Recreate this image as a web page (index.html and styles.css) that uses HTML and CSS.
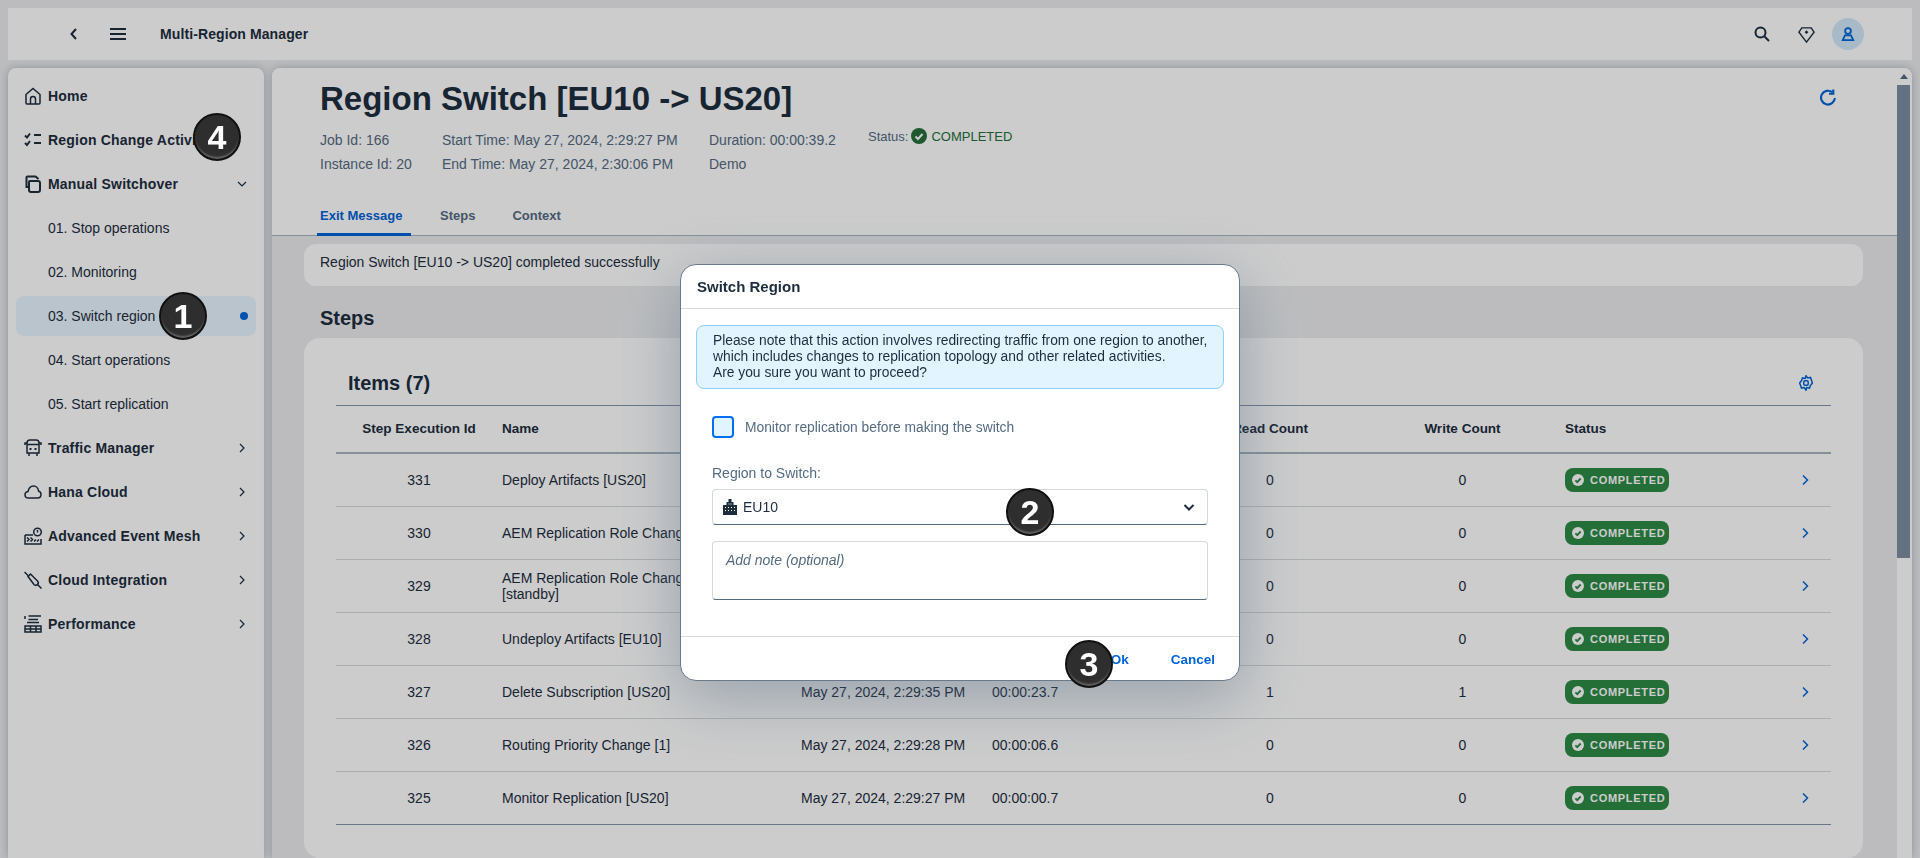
FILE: index.html
```html
<!DOCTYPE html>
<html lang="en">
<head>
  <meta charset="UTF-8" />
  <title>Multi-Region Manager</title>
  <link rel="stylesheet" href="styles.css">
</head>
<body>

  <header class="topbar">
    <svg class="top-back" viewBox="0 0 16 16"><path d="M10 3 5.500 8l4.500 5"/></svg>
    <svg class="top-menu" viewBox="0 0 16 12"><path d="M0 1h16M0 6h16M0 11h16"/></svg>
    <span class="top-title">Multi-Region Manager</span>
    <div class="top-actions">
      <svg class="ico-search" viewBox="0 0 16 16"><circle cx="6.500" cy="6.500" r="5"/><path d="m10.500 10.500 4.500 4.500"/></svg>
      <svg class="ico-diamond" viewBox="0 0 18 18"><path d="M4 2h10l3 4.500L9 17 1 6.500z"/><path class="fill" d="M9 4.500l2 2-2 2-2-2z"/></svg>
      <span class="avatar">
        <svg viewBox="0 0 16 16"><circle cx="8" cy="4.500" r="3.300"/><path d="M4.500 9.500h7l2.500 5.500H2z"/></svg>
      </span>
    </div>
  </header>

  <div class="layout">
    <nav class="sidenav">
      <a class="nav-item">
        <svg viewBox="0 0 18 18"><path d="M2 7.500 9 1.500l7 6V16a1 1 0 0 1-1 1H3a1 1 0 0 1-1-1zM6.500 17v-5a2.500 2.500 0 0 1 5 0v5"/></svg>
        <span>Home</span>
      </a>
      <a class="nav-item">
        <svg class="ico-thick" viewBox="0 0 18 16"><path d="m1 3.500 2 2 3-4M1 11l2 2 3-4M10 3h7M10 11h7"/></svg>
        <span>Region Change Activities</span>
      </a>
      <a class="nav-item">
        <svg class="ico-thick" viewBox="0 0 18 18"><path d="M4 12H2.500V2.500a1 1 0 0 1 1-1h8l3 2.500M6 6h8a2 2 0 0 1 2 2v7a2 2 0 0 1-2 2H7a2 2 0 0 1-2-2V7a1 1 0 0 1 1-1z"/></svg>
        <span>Manual Switchover</span>
        <svg class="nav-arrow" viewBox="0 0 12 12"><path d="m2 4 4 4 4-4"/></svg>
      </a>
      <a class="nav-sub">01. Stop operations</a>
      <a class="nav-sub">02. Monitoring</a>
      <a class="nav-sub active">03. Switch region<i class="nav-dot"></i></a>
      <a class="nav-sub">04. Start operations</a>
      <a class="nav-sub">05. Start replication</a>
      <a class="nav-item">
        <svg viewBox="0 0 18 18"><path d="M3 4c0-2 1-3 3-3h6c2 0 3 1 3 3v10H3zM3 4H1v2M15 4h2v2M3 5.500h12M5 14v3M13 14v3"/><path class="fill" d="M5.500 9h2v2h-2zM10.500 9h2v2h-2z"/></svg>
        <span>Traffic Manager</span>
        <svg class="nav-arrow" viewBox="0 0 12 12"><path d="m4 2 4 4-4 4"/></svg>
      </a>
      <a class="nav-item">
        <svg viewBox="0 0 18 14"><path d="M4.500 13C2.500 13 1 11.500 1 9.700 1 8 2.300 6.700 4 6.500 4.700 3.300 6.800 1 9.500 1c2.800 0 4.800 2.300 5 5 1.500.5 2.500 1.900 2.500 3.500 0 2-1.500 3.500-3.500 3.500z"/></svg>
        <span>Hana Cloud</span>
        <svg class="nav-arrow" viewBox="0 0 12 12"><path d="m4 2 4 4-4 4"/></svg>
      </a>
      <a class="nav-item">
        <svg viewBox="0 0 18 18"><path d="M1 8h8M1 8v9h16v-5M3 10.500l2 2-2 2M6.500 10.500l2 2-2 2M10 14.500l2-2M13 14.500l2-2"/><circle cx="13.500" cy="5" r="3.800"/><path d="M13.500 3v2.500"/></svg>
        <span>Advanced Event Mesh</span>
        <svg class="nav-arrow" viewBox="0 0 12 12"><path d="m4 2 4 4-4 4"/></svg>
      </a>
      <a class="nav-item">
        <svg viewBox="0 0 18 18"><path d="M0.500 1 5 5.500M13 13l4.500 4.500"/><path d="M4 5.500 6.500 3l7 7c1 1 1 2.500 0 3.500s-2.500 1-3.500 0z"/></svg>
        <span>Cloud Integration</span>
        <svg class="nav-arrow" viewBox="0 0 12 12"><path d="m4 2 4 4-4 4"/></svg>
      </a>
      <a class="nav-item">
        <svg viewBox="0 0 18 18"><path d="M1 1v3M4.500 1H17M4.500 4.500H14M3 7.500h12M1 11h16v6H1zM1 14h16M6.500 11v6M12 11v6"/></svg>
        <span>Performance</span>
        <svg class="nav-arrow" viewBox="0 0 12 12"><path d="m4 2 4 4-4 4"/></svg>
      </a>
    </nav>

    <div class="main">
      <div class="main-scroll">
        <section class="job-header">
          <h1>Region Switch [EU10 -&gt; US20]</h1>
          <div class="job-meta">
            <div class="meta-col meta-ids">
              <span>Job Id: 166</span>
              <span>Instance Id: 20</span>
            </div>
            <div class="meta-col meta-times">
              <span>Start Time: May 27, 2024, 2:29:27 PM</span>
              <span>End Time: May 27, 2024, 2:30:06 PM</span>
            </div>
            <div class="meta-col meta-duration">
              <span>Duration: 00:00:39.2</span>
              <span>Demo</span>
            </div>
            <div class="meta-status">
              Status:
              <svg viewBox="0 0 16 16"><circle class="fill" cx="8" cy="8" r="8"/><path class="tick" d="m4.500 8.500 2.500 2.500 4.500-5"/></svg>
              <em>COMPLETED</em>
            </div>
          </div>
          <svg class="ico-refresh" viewBox="0 0 16 16"><path d="M14 8.500A6.500 6.500 0 1 1 11.500 3"/><path d="M12.500 0.500V4.500H8.500"/></svg>
          <div class="tabs">
            <a class="tab active">Exit Message</a>
            <a class="tab">Steps</a>
            <a class="tab">Context</a>
          </div>
        </section>

        <div class="content">
          <div class="exit-message">Region Switch [EU10 -&gt; US20] completed successfully</div>
          <h2 class="steps-title">Steps</h2>

          <div class="items-card">
            <div class="items-head">
              <h3>Items (7)</h3>
              <svg class="ico-gear" viewBox="0 0 14 16"><path d="M7 .8l1.700 2.100 2.800-.5.900 2.500L13.400 8l-2 2.600-.900 2.500-2.800-.5L7 15.200l-1.700-2.600-2.800.5-.9-2.500L.6 8l2-2.600.9-2.500 2.800.5z"/><rect x="4.800" y="5.800" width="4.400" height="4.400" rx="1.200"/></svg>
            </div>
            <table class="steps-table">
              <colgroup>
                <col class="c-id"><col class="c-name"><col class="c-start"><col class="c-dur"><col class="c-read"><col class="c-write"><col class="c-status"><col class="c-go">
              </colgroup>
              <thead>
                <tr>
                  <th class="num">Step Execution Id</th><th>Name</th><th>Start Time</th><th>Duration</th><th class="num">Read Count</th><th class="num">Write Count</th><th>Status</th><th></th>
                </tr>
              </thead>
              <tbody>
                <tr>
                  <td class="num">331</td><td>Deploy Artifacts [US20]</td><td>May 27, 2024, 2:30:02 PM</td><td>00:00:03.6</td><td class="num">0</td><td class="num">0</td>
                  <td><span class="badge"><svg viewBox="0 0 16 16"><circle class="fill" cx="8" cy="8" r="8"/><path d="m4.500 8.500 2.500 2.500 4.500-5"/></svg>COMPLETED</span></td>
                  <td class="go"><svg viewBox="0 0 12 12"><path d="m4 1.500 4.500 4.500L4 10.500"/></svg></td>
                </tr>
                <tr>
                  <td class="num">330</td><td>AEM Replication Role Change [primary]</td><td>May 27, 2024, 2:30:01 PM</td><td>00:00:01.2</td><td class="num">0</td><td class="num">0</td>
                  <td><span class="badge"><svg viewBox="0 0 16 16"><circle class="fill" cx="8" cy="8" r="8"/><path d="m4.500 8.500 2.500 2.500 4.500-5"/></svg>COMPLETED</span></td>
                  <td class="go"><svg viewBox="0 0 12 12"><path d="m4 1.500 4.500 4.500L4 10.500"/></svg></td>
                </tr>
                <tr>
                  <td class="num">329</td><td class="wrap">AEM Replication Role Change<br>[standby]</td><td>May 27, 2024, 2:30:00 PM</td><td>00:00:01.1</td><td class="num">0</td><td class="num">0</td>
                  <td><span class="badge"><svg viewBox="0 0 16 16"><circle class="fill" cx="8" cy="8" r="8"/><path d="m4.500 8.500 2.500 2.500 4.500-5"/></svg>COMPLETED</span></td>
                  <td class="go"><svg viewBox="0 0 12 12"><path d="m4 1.500 4.500 4.500L4 10.500"/></svg></td>
                </tr>
                <tr>
                  <td class="num">328</td><td>Undeploy Artifacts [EU10]</td><td>May 27, 2024, 2:29:59 PM</td><td>00:00:00.8</td><td class="num">0</td><td class="num">0</td>
                  <td><span class="badge"><svg viewBox="0 0 16 16"><circle class="fill" cx="8" cy="8" r="8"/><path d="m4.500 8.500 2.500 2.500 4.500-5"/></svg>COMPLETED</span></td>
                  <td class="go"><svg viewBox="0 0 12 12"><path d="m4 1.500 4.500 4.500L4 10.500"/></svg></td>
                </tr>
                <tr>
                  <td class="num">327</td><td>Delete Subscription [US20]</td><td>May 27, 2024, 2:29:35 PM</td><td>00:00:23.7</td><td class="num">1</td><td class="num">1</td>
                  <td><span class="badge"><svg viewBox="0 0 16 16"><circle class="fill" cx="8" cy="8" r="8"/><path d="m4.500 8.500 2.500 2.500 4.500-5"/></svg>COMPLETED</span></td>
                  <td class="go"><svg viewBox="0 0 12 12"><path d="m4 1.500 4.500 4.500L4 10.500"/></svg></td>
                </tr>
                <tr>
                  <td class="num">326</td><td>Routing Priority Change [1]</td><td>May 27, 2024, 2:29:28 PM</td><td>00:00:06.6</td><td class="num">0</td><td class="num">0</td>
                  <td><span class="badge"><svg viewBox="0 0 16 16"><circle class="fill" cx="8" cy="8" r="8"/><path d="m4.500 8.500 2.500 2.500 4.500-5"/></svg>COMPLETED</span></td>
                  <td class="go"><svg viewBox="0 0 12 12"><path d="m4 1.500 4.500 4.500L4 10.500"/></svg></td>
                </tr>
                <tr>
                  <td class="num">325</td><td>Monitor Replication [US20]</td><td>May 27, 2024, 2:29:27 PM</td><td>00:00:00.7</td><td class="num">0</td><td class="num">0</td>
                  <td><span class="badge"><svg viewBox="0 0 16 16"><circle class="fill" cx="8" cy="8" r="8"/><path d="m4.500 8.500 2.500 2.500 4.500-5"/></svg>COMPLETED</span></td>
                  <td class="go"><svg viewBox="0 0 12 12"><path d="m4 1.500 4.500 4.500L4 10.500"/></svg></td>
                </tr>
              </tbody>
            </table>
          </div>
        </div>
      </div>

      <div class="scrollbar">
        <i class="scroll-up"></i>
        <div class="scroll-thumb"></div>
      </div>
    </div>
  </div>

  <div class="block-layer"></div>

  <div class="dialog">
    <div class="dialog-head">Switch Region</div>
    <div class="dialog-body">
      <div class="info-strip">
        Please note that this action involves redirecting traffic from one region to another,<br>
        which includes changes to replication topology and other related activities.<br>
        Are you sure you want to proceed?
      </div>
      <div class="form">
        <label class="check-row"><span class="checkbox"></span>Monitor replication before making the switch</label>
        <div class="field-label">Region to Switch:</div>
        <div class="select">
          <svg class="ico-building" viewBox="0 0 14 16"><path class="fill" d="M5.500 0h3v3h2v3H14v10H0V6h3.500V3h2z"/><path class="win" d="M5.500 5h1M7.500 5h1M2 8.500h1M5 8.500h1M8 8.500h1M11 8.500h1M2 11.500h1M5 11.500h1M8 11.500h1M11 11.500h1"/></svg>
          <span>EU10</span>
          <svg class="select-arrow" viewBox="0 0 12 12"><path d="m1.500 4 4.500 4.500L10.500 4"/></svg>
        </div>
        <div class="note">Add note (optional)</div>
      </div>
    </div>
    <div class="dialog-foot">
      <a class="dlg-btn">Ok</a>
      <a class="dlg-btn">Cancel</a>
    </div>
  </div>

  <span class="marker m1">1</span>
  <span class="marker m2">2</span>
  <span class="marker m3">3</span>
  <span class="marker m4">4</span>

</body>
</html>
```

FILE: styles.css
```css
* {
  box-sizing: border-box;
  margin: 0;
  padding: 0;
}

html, body {
  height: 100%;
}

body {
  font-family: "Liberation Sans", Arial, sans-serif;
  font-size: 14px;
  color: #1d2d3e;
  background: #ebecee;
  overflow: hidden;
  display: flex;
  flex-direction: column;
  gap: 8px;
  padding: 8px 8px 0;
}

svg {
  fill: none;
  stroke: currentColor;
  stroke-width: 1.5;
  flex: none;
}

svg .fill {
  fill: currentColor;
  stroke: none;
}

/* top bar */
.topbar {
  height: 52px;
  flex: none;
  background: #fff;
  display: flex;
  align-items: center;
  padding-left: 58px;
}

.top-back {
  width: 16px;
  height: 16px;
  stroke-width: 2;
}

.top-menu {
  width: 16px;
  height: 12px;
  margin-left: 28px;
  stroke-width: 2;
}

.top-title {
  font-weight: bold;
  margin-left: 34px;
  letter-spacing: 0.1px;
}

.top-actions {
  margin-left: auto;
  display: flex;
  align-items: center;
  padding-right: 48px;
}

.ico-search {
  width: 16px;
  height: 16px;
  stroke-width: 2;
}

.ico-diamond {
  width: 17px;
  height: 17px;
  margin-left: 28px;
}

.avatar {
  width: 32px;
  height: 32px;
  border-radius: 50%;
  background: #d3e9f9;
  color: #0064d9;
  margin-left: 17px;
  display: flex;
  align-items: center;
  justify-content: center;
}

.avatar svg {
  width: 14px;
  height: 14px;
  stroke-width: 2;
}

.layout {
  flex: 1;
  min-height: 0;
  display: flex;
  gap: 8px;
}

/* side navigation */
.sidenav {
  width: 256px;
  flex: none;
  background: #fff;
  border-radius: 8px 8px 0 0;
  box-shadow: 0 0 8px rgba(85, 107, 130, 0.4);
  padding: 8px 8px;
  display: flex;
  flex-direction: column;
  gap: 4px;
}

.nav-item {
  height: 40px;
  display: flex;
  align-items: center;
  padding-left: 8px;
  padding-right: 8px;
  font-weight: bold;
  white-space: nowrap;
  letter-spacing: 0.2px;
  overflow: hidden;
}

.nav-item > svg:first-child {
  width: 18px;
  height: 18px;
  margin-right: 6px;
}

.nav-item > .ico-thick:first-child {
  stroke-width: 2;
}

.nav-arrow {
  width: 12px;
  height: 12px;
  margin-left: auto;
  stroke-width: 1.2;
}

.nav-sub {
  height: 40px;
  display: flex;
  align-items: center;
  padding-left: 32px;
  padding-right: 8px;
  border-radius: 8px;
}

.nav-sub.active {
  background: #e9f6ff;
}

.nav-dot {
  width: 8px;
  height: 8px;
  border-radius: 50%;
  background: #0064d9;
  margin-left: auto;
}

/* main panel */
.main {
  flex: 1;
  min-width: 0;
  display: flex;
  background: #ebecee;
  border-radius: 8px 8px 0 0;
  box-shadow: 0 0 8px rgba(85, 107, 130, 0.4);
  overflow: hidden;
}

.main-scroll {
  flex: 1;
  min-width: 0;
  overflow: hidden;
}

.scrollbar {
  width: 15px;
  flex: none;
  background: #fff;
  padding: 6px 2px 0 0;
  display: flex;
  flex-direction: column;
  align-items: center;
}

.scroll-up {
  border: 4px solid transparent;
  border-top: 0;
  border-bottom: 5px solid #556b82;
  width: 0;
  height: 5px;
  margin-bottom: 6px;
}

.scroll-thumb {
  width: 13px;
  height: 473px;
  background: #7d8ea1;
}

.job-header {
  position: relative;
  height: 168px;
  background: #fff;
  border-bottom: 1px solid #a9b4be;
  padding: 0 0 0 48px;
}

.job-header h1 {
  font-size: 33px;
  line-height: 40px;
  padding-top: 11px;
  height: 58px;
}

.job-meta {
  display: flex;
  color: #556b82;
  margin-top: 6px;
}

.meta-col {
  display: flex;
  flex-direction: column;
  gap: 8px;
  line-height: 16px;
}

.meta-ids {
  width: 122px;
}

.meta-times {
  width: 267px;
}

.meta-duration {
  width: 159px;
}

.meta-status {
  display: flex;
  align-items: center;
  gap: 2px;
  height: 16px;
  margin-top: -4px;
  font-size: 13px;
}

.meta-status svg {
  width: 16px;
  height: 16px;
  color: #256f3a;
  margin-left: 1px;
  margin-right: 2px;
}

.meta-status .tick {
  stroke: #fff;
  stroke-width: 2;
}

.meta-status em {
  font-style: normal;
  color: #256f3a;
}

.ico-refresh {
  position: absolute;
  top: 21px;
  right: 60px;
  width: 17px;
  height: 17px;
  color: #0064d9;
  stroke-width: 2;
}

.tabs {
  position: absolute;
  left: 45px;
  bottom: -1px;
  display: flex;
  gap: 12px;
}

.tab {
  height: 40px;
  padding: 0 8px 0 17px;
  line-height: 39px;
  font-size: 13px;
  font-weight: bold;
  color: #556b82;
}

.tab.active {
  width: 94px;
  color: #0064d9;
  border-bottom: 3px solid #0064d9;
  padding: 0 0 0 3px;
}

/* content */
.content {
  padding: 8px 34px 0 32px;
}

.exit-message {
  height: 42px;
  background: #fff;
  border-radius: 12px;
  padding: 10px 16px;
  line-height: 16px;
}

.steps-title {
  font-size: 20px;
  line-height: 24px;
  margin: 20px 0 8px 16px;
}

.items-card {
  background: #fff;
  border-radius: 16px;
  padding: 0 32px;
  height: 520px;
}

.items-head {
  height: 68px;
  display: flex;
  align-items: flex-end;
  justify-content: space-between;
  border-bottom: 1px solid #8396a8;
  padding: 0 18px 10px 12px;
}

.items-head h3 {
  font-size: 20px;
  line-height: 24px;
}

.ico-gear {
  width: 14px;
  height: 16px;
  color: #0064d9;
  margin-bottom: 4px;
}

.steps-table {
  width: 100%;
  table-layout: fixed;
  border-collapse: collapse;
}

.c-id { width: 166px; }
.c-name { width: 299px; }
.c-start { width: 191px; }
.c-dur { width: 188px; }
.c-read { width: 180px; }
.c-write { width: 205px; }
.c-status { width: 223px; }

.steps-table th {
  height: 47px;
  padding-bottom: 2px;
  font-size: 13.500px;
  font-weight: bold;
  text-align: left;
  border-bottom: 2px solid #a9b4be;
}

.steps-table td {
  height: 53px;
  line-height: 16px;
  border-bottom: 1px solid #d5dadd;
}

.steps-table tr:last-child td {
  border-bottom-color: #8396a8;
}

.steps-table .num {
  text-align: center;
}

.badge {
  display: inline-flex;
  align-items: center;
  gap: 6px;
  height: 24px;
  width: 104px;
  background: #2e8a47;
  color: #fff;
  border-radius: 8px;
  font-size: 11px;
  font-weight: bold;
  letter-spacing: 0.7px;
  padding-left: 7px;
  vertical-align: middle;
}

.badge svg {
  width: 12px;
  height: 12px;
}

.badge svg path {
  stroke: #2e8a47;
  stroke-width: 2.500;
}

.go {
  color: #0064d9;
}

.go svg {
  width: 12px;
  height: 12px;
  display: block;
  margin-left: 11px;
}

/* dialog */
.block-layer {
  position: fixed;
  inset: 0;
  background: rgba(0, 0, 0, 0.2);
}

.dialog {
  position: fixed;
  left: 680px;
  top: 264px;
  width: 560px;
  height: 417px;
  background: #fff;
  border: 1px solid #6a7a8a;
  border-radius: 16px;
  box-shadow: 0 16px 64px rgba(85, 107, 130, 0.45);
  display: flex;
  flex-direction: column;
}

.dialog-head {
  height: 44px;
  flex: none;
  border-bottom: 1px solid #d9d9d9;
  padding: 0 16px;
  line-height: 44px;
  font-weight: bold;
  font-size: 15px;
}

.dialog-body {
  flex: 1;
  padding: 16px 15px 0;
}

.info-strip {
  height: 64px;
  background: #e1f4ff;
  border: 1px solid #8cd0fb;
  border-radius: 8px;
  padding: 7px 16px;
  line-height: 16px;
  font-size: 13.800px;
  white-space: nowrap;
}

.form {
  padding: 0 16px;
}

.check-row {
  display: flex;
  align-items: center;
  margin-top: 27px;
  height: 22px;
  color: #556b82;
  font-size: 13.800px;
}

.checkbox {
  width: 22px;
  height: 22px;
  border: 2px solid #0070f2;
  border-radius: 4px;
  background: #e1f4ff;
  margin-right: 11px;
}

.field-label {
  margin-top: 27px;
  line-height: 16px;
  color: #556b82;
}

.select {
  height: 36px;
  margin-top: 8px;
  border: 1px solid #d5dadd;
  border-bottom-color: #556b82;
  border-radius: 4px;
  display: flex;
  align-items: center;
  padding: 0 12px 0 10px;
}

.ico-building {
  width: 14px;
  height: 16px;
  margin-right: 6px;
}

.ico-building .win {
  stroke: #fff;
  stroke-width: 1;
}

.select-arrow {
  width: 12px;
  height: 12px;
  margin-left: auto;
  stroke-width: 2;
}

.note {
  height: 59px;
  margin-top: 16px;
  border: 1px solid #d5dadd;
  border-bottom-color: #556b82;
  border-radius: 4px;
  padding: 10px 13px;
  line-height: 16px;
  color: #556b82;
  font-style: italic;
}

.dialog-foot {
  height: 44px;
  flex: none;
  border-top: 1px solid #d9d9d9;
  display: flex;
  align-items: center;
  justify-content: flex-end;
  gap: 42px;
  padding-right: 24px;
  padding-top: 1px;
  font-size: 13.500px;
}

.dlg-btn {
  color: #0064d9;
  font-weight: bold;
}

/* numbered call-outs */
.marker {
  position: fixed;
  width: 48px;
  height: 48px;
  border-radius: 50%;
  background: #2e2e2e;
  border: 2px solid #111;
  box-shadow: inset 0 -3px 2px -1px #666;
  color: #fff;
  font-size: 34px;
  font-weight: bold;
  line-height: 44px;
  text-align: center;
}

.m1 { left: 159px; top: 292px; }
.m2 { left: 1006px; top: 488px; }
.m3 { left: 1065px; top: 640px; }
.m4 { left: 193px; top: 113px; }
```
